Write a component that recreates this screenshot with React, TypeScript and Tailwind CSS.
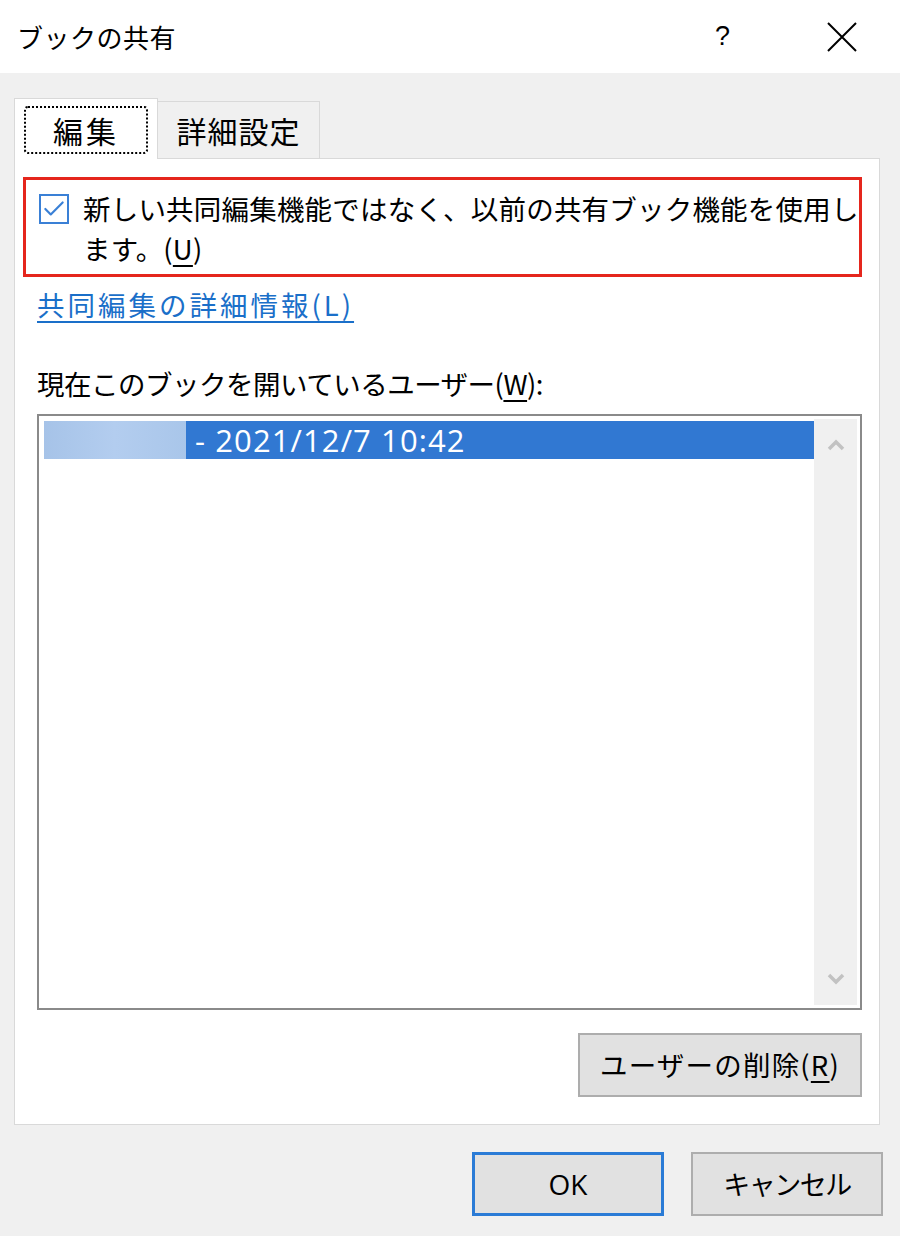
import { Check } from "lucide-react";

const jp = "font-['Noto_Sans_CJK_JP','Noto_Sans',sans-serif]";

function CloseIcon() {
  return (
    <svg width="32" height="30" viewBox="0 0 32 30" className="text-black">
      <path d="M2 1 L30 29 M30 1 L2 29" stroke="currentColor" strokeWidth="2" fill="none" />
    </svg>
  );
}

function Chevron({ up }: { up: boolean }) {
  return (
    <svg width="18" height="12" viewBox="0 0 18 12">
      <path
        d={up ? "M2 10 L9 3 L16 10" : "M2 2 L9 9 L16 2"}
        stroke="#c2c2c2"
        strokeWidth="3.5"
        fill="none"
      />
    </svg>
  );
}

function Mnemonic({ ch }: { ch: string }) {
  return (
    <span>
      (<span className="underline underline-offset-[5px] decoration-[2px]">{ch}</span>)
    </span>
  );
}

export default function App() {
  return (
    <div className={`w-[900px] h-[1236px] bg-[#f0f0f0] flex flex-col text-black ${jp}`}>
      {/* title bar */}
      <div className="h-[73px] bg-white flex items-center pl-[17px] pr-[42px]">
        <span className="text-[26px] tracking-[0.5px]">ブックの共有</span>
        <span className="ml-auto mr-[96px] text-[27px] font-['Liberation_Sans',sans-serif]">?</span>
        <CloseIcon />
      </div>

      <div className="pl-[14px] pr-[20px] pt-[24px]">
        {/* tabs */}
        <div className="flex items-end h-[61px]">
          <div className="relative z-10 w-[144px] h-[61px] bg-white border border-b-0 border-[#d9d9d9] flex items-start justify-center pt-[7px] -mb-px pb-px">
            <div className="w-[124px] h-[48px] border-2 border-dotted border-black rounded-[4px] flex items-center justify-center text-[30px] tracking-[3px]">
              編集
            </div>
          </div>
          <div className="w-[162px] h-[57px] bg-[#f0f0f0] border border-l-0 border-b-0 border-[#d9d9d9] flex items-center justify-center text-[30px] tracking-[1px]">
            詳細設定
          </div>
        </div>

        {/* panel */}
        <div className="w-[866px] h-[967px] bg-white border border-[#d9d9d9] pl-[8px] pr-[17px] pt-[18px] flex flex-col">
          <div className="border-[3px] border-[#e5261d] h-[100px] pl-[13px] pt-[8px] flex gap-[14px]">
            <div className="w-[30px] h-[30px] mt-[6px] shrink-0 border-2 border-[#3a80d6] flex items-center justify-center">
              <Check size={26} strokeWidth={2} className="text-[#3a80d6]" />
            </div>
            <div className="flex flex-col text-[27.5px] leading-[40px] tracking-[0.2px]">
              <span className="whitespace-nowrap">新しい共同編集機能ではなく、以前の共有ブック機能を使用し</span>
              <span>
                ます。<Mnemonic ch="U" />
              </span>
            </div>
          </div>

          <div className="ml-[14px] mt-[9px] text-[27.5px] leading-[36px] text-[#1a6fc9] underline underline-offset-[5px] decoration-[2px] tracking-[3px]">
            共同編集の詳細情報(L)
          </div>

          <div className="ml-[14px] mt-[43px] text-[27.5px] leading-[36px] tracking-[-0.5px]">
            現在このブックを開いているユーザー(<span className="underline underline-offset-[5px] decoration-[2px]">W</span>):
          </div>

          <div className="ml-[14px] mt-[13px] h-[596px] border-2 border-[#8a8a8a] bg-white flex p-[3px]">
            <div className="flex-1 pt-[2px] pl-[2px]">
              <div className="h-[38px] bg-[#3178d2] flex items-center">
                <div className="w-[142px] h-full bg-gradient-to-r from-[#a6c3e8] via-[#b3cdef] to-[#a9c6ea]" />
                <span className="ml-[9px] text-white text-[31px] leading-none font-['Open_Sans','Noto_Sans',sans-serif] tracking-[1.1px]">
                  - 2021/12/7 10:42
                </span>
              </div>
            </div>
            <div className="w-[43px] bg-[#f0f0f0] flex flex-col items-center justify-between py-[20px]">
              <Chevron up />
              <Chevron up={false} />
            </div>
          </div>

          <div className="flex justify-end mt-[23px]">
            <button className="w-[284px] h-[64px] bg-[#e1e1e1] border-2 border-[#adadad] text-[27.5px] tracking-[1.2px]">
              ユーザーの削除<Mnemonic ch="R" />
            </button>
          </div>
        </div>
      </div>

      {/* dialog buttons */}
      <div className="flex justify-end gap-[27px] pr-[17px] mt-[27px]">
        <button className="w-[192px] h-[64px] bg-[#e1e1e1] border-[3px] border-[#2a7bd6] text-[28px] font-['Open_Sans',sans-serif]">
          OK
        </button>
        <button className="w-[192px] h-[64px] bg-[#e1e1e1] border-2 border-[#adadad] text-[27px] tracking-[-1.5px]">
          キャンセル
        </button>
      </div>
    </div>
  );
}
